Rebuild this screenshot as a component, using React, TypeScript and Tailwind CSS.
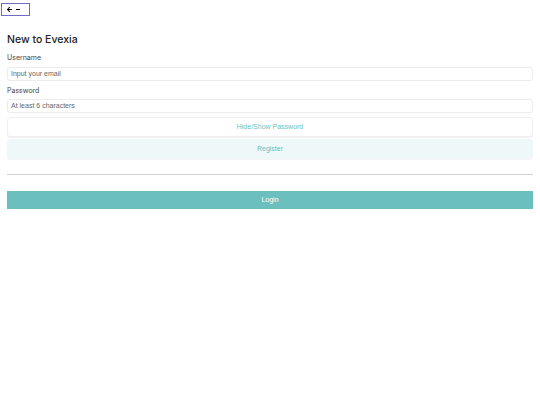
import { ArrowLeft } from 'lucide-react';

export default function App() {
  return (
    <div className="min-h-[405px] w-[540px] bg-white font-['Liberation_Sans',sans-serif]">
      <header className="relative flex h-[19px] items-center justify-center">
        <button className="absolute left-[1px] top-[3px] flex h-[13px] w-[29px] items-center gap-[3px] border border-[#6d6dc4] pl-[4px] text-black">
          <ArrowLeft size={7} strokeWidth={3.5} />
          <span className="block h-[1.5px] w-[4px] bg-black" />
        </button>
        <span className="text-[7px] text-white">Registration</span>
      </header>

      <main className="px-[7px] pt-[13px]">
        <h1 className="font-['Inter',sans-serif] text-[10.5px] font-medium leading-[16px] text-[#222]">
          New to Evexia
        </h1>

        <label className="mt-[5px] block font-['Inter',sans-serif] text-[7px] leading-[10px] text-[#444]">
          Username
        </label>
        <div className="mt-[4px] flex h-[14px] items-center rounded-[3px] border border-[#ececec] px-[3px] text-[7px] text-[#666]">
          Input your email
        </div>

        <label className="mt-[5px] block font-['Inter',sans-serif] text-[7px] leading-[10px] text-[#444]">
          Password
        </label>
        <div className="mt-[3px] flex h-[14px] items-center rounded-[3px] border border-[#ececec] px-[3px] text-[7px] text-[#666]">
          At least 6 characters
        </div>

        <button className="mt-[4px] flex h-[20px] w-full items-center justify-center rounded-[3px] border border-[#efefef] bg-white text-[7px] text-[#6bbfbe] shadow-[0_1px_1px_rgba(0,0,0,0.06)]">
          Hide/Show Password
        </button>
        <button className="mt-[2px] flex h-[20px] w-full items-center justify-center rounded-[3px] bg-[#eef8f8] text-[7px] text-[#6bbfbe] shadow-[0_1px_1px_rgba(0,0,0,0.05)]">
          Register
        </button>

        <hr className="mt-[15px] border-t border-[#cfcfcf]" />

        <button className="mt-[16px] flex h-[18px] w-full items-center justify-center bg-[#6bbfbe] text-[7px] text-white">
          Login
        </button>
      </main>
    </div>
  );
}
